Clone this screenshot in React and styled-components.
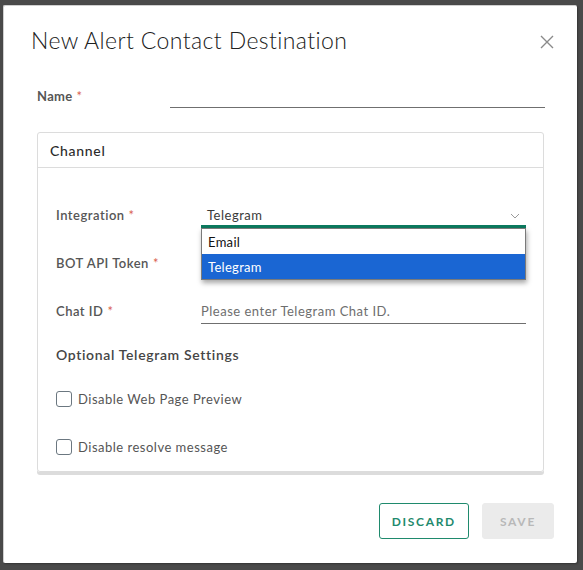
import React from "react";
import styled, { createGlobalStyle } from "styled-components";

const Global = createGlobalStyle`
  html, body { margin: 0; padding: 0; background: #4a4a4a; }
  body { font-family: "Lato", "Open Sans", sans-serif; letter-spacing: 0.5px; }
  * { box-sizing: border-box; }
`;

const Backdrop = styled.div`
  width: 583px;
  height: 570px;
  background: #4a4a4a;
  padding: 5px 6px 7px 3px;
`;

const Modal = styled.div`
  position: relative;
  width: 574px;
  height: 558px;
  background: #fff;
  border-radius: 2px;
  border-top: 1px solid #d0d0d0;
  border-left: 1px solid #d0d0d0;
  box-shadow: 1px 1px 2px rgba(0,0,0,0.3);
  display: flex;
  flex-direction: column;
`;

const Header = styled.div`
  display: flex;
  align-items: center;
  justify-content: space-between;
  height: 70px;
  padding: 0 23px 0 27px;
`;

const Title = styled.h3`
  margin: 0 0 3px;
  font-size: 23px;
  font-weight: 300;
  color: #202020;
  letter-spacing: 0.4px;
`;

const Close = styled.button`
  border: 0;
  background: none;
  padding: 0;
  margin-top: 1px;
  width: 14px;
  height: 14px;
  display: flex;
  cursor: pointer;
`;

const Body = styled.div`
  flex: 1;
  padding: 0 32px 0 33px;
  display: flex;
  flex-direction: column;
`;

const NameRow = styled.div`
  display: flex;
  align-items: center;
  height: 35px;
  margin-top: 2px;
`;

const NameLabel = styled.label`
  width: 133px;
  font-size: 13px;
  font-weight: 700;
  color: #565656;
  letter-spacing: 0.3px;
`;

const Star = styled.span`
  color: #d9614f;
  margin-left: 4px;
  font-weight: 400;
`;

const Underline = styled.div`
  flex: 1;
  height: 24px;
  margin-top: 1px;
  border-bottom: 1px solid #6f6f6f;
`;

const Card = styled.div`
  margin: 19px 1px 0 0;
  border: 1px solid #dcdcdc;
  border-radius: 3px;
  box-shadow: 0 3px 0 0 #dcdcdc;
  height: 340px;
  display: flex;
  flex-direction: column;
`;

const CardHeader = styled.div`
  height: 35px;
  border-bottom: 1px solid #dcdcdc;
  display: flex;
  align-items: center;
  padding: 0 12px;
  font-size: 14px;
  color: #2b2b2b;
  font-weight: 500;
  letter-spacing: 0.7px;
`;

const CardBody = styled.div`
  padding: 23px 17px 0 18px;
  display: flex;
  flex-direction: column;
`;

const Row = styled.div`
  display: flex;
  align-items: center;
  height: 48px;
`;

const Label = styled.label`
  width: 145px;
  font-size: 13px;
  font-weight: 600;
  color: #565656;
`;

const Field = styled.div`
  position: relative;
  flex: 1;
  height: ${(p) => (p.$select ? "26px" : "24px")};
  margin-top: ${(p) => (p.$select ? "0" : "1px")};
  display: flex;
  align-items: center;
  padding: ${(p) => (p.$select ? "3px 0 0 6px" : "0")};
  border-bottom: ${(p) => (p.$select ? "3px solid #0c7a5f" : "1px solid #6f6f6f")};
  font-size: 13px;
  color: ${(p) => (p.$placeholder ? "#6e6e6e" : "#3a3a3a")};
`;

const Chevron = styled.svg`
  position: absolute;
  right: 6px;
  top: 11px;
`;

const Menu = styled.div`
  position: absolute;
  left: 0;
  right: 0;
  top: 100%;
  margin-top: 3px;
  border: 1px solid #7a7a7a;
  background: #fff;
  box-shadow: 1px 3px 5px rgba(0,0,0,0.35);
  z-index: 5;
`;

const Option = styled.div`
  height: 25px;
  display: flex;
  align-items: center;
  padding-left: 6px;
  font-size: 13px;
  letter-spacing: 0.3px;
  color: ${(p) => (p.$active ? "#fff" : "#111")};
  background: ${(p) => (p.$active ? "#1a66d3" : "#fff")};
`;

const SectionTitle = styled.div`
  height: 39px;
  display: flex;
  align-items: center;
  font-size: 14px;
  font-weight: 600;
  color: #454545;
  letter-spacing: 0.65px;
`;

const CheckRow = styled.label`
  height: 48px;
  display: flex;
  align-items: center;
  gap: 6px;
  font-size: 13px;
  color: #555;
  padding-top: 2px;
`;

const Box = styled.span`
  width: 16px;
  height: 16px;
  border: 1px solid #6b7780;
  border-radius: 3px;
  background: #fff;
`;

const Footer = styled.div`
  display: flex;
  justify-content: flex-end;
  gap: 13px;
  padding: 0 23px 24px 0;
`;

const Button = styled.button`
  height: 36px;
  padding: 0 ${(p) => p.$pad}px;
  border-radius: 3px;
  font-family: inherit;
  font-size: 12px;
  font-weight: 700;
  letter-spacing: 1.7px;
  text-transform: uppercase;
  border: 1px solid ${(p) => (p.$disabled ? "#ebebeb" : "#1f8a6d")};
  background: ${(p) => (p.$disabled ? "#ebebeb" : "#fff")};
  color: ${(p) => (p.$disabled ? "#b8b8b8" : "#1f8a6d")};
`;

export default function App() {
  return (
    <>
      <Global />
      <Backdrop>
        <Modal>
          <Header>
            <Title>New Alert Contact Destination</Title>
            <Close aria-label="close">
              <svg width="14" height="14" viewBox="0 0 14 14">
                <path d="M1 1 L13 13 M13 1 L1 13" stroke="#8a8a8a" strokeWidth="1.4" fill="none" />
              </svg>
            </Close>
          </Header>
          <Body>
            <NameRow>
              <NameLabel>Name<Star>*</Star></NameLabel>
              <Underline />
            </NameRow>
            <Card>
              <CardHeader>Channel</CardHeader>
              <CardBody>
                <Row>
                  <Label>Integration<Star>*</Star></Label>
                  <Field $select>
                    Telegram
                    <Chevron width="10" height="6" viewBox="0 0 10 6">
                      <path d="M1 1 L5 5 L9 1" stroke="#9a9a9a" strokeWidth="1" fill="none" />
                    </Chevron>
                    <Menu>
                      <Option>Email</Option>
                      <Option $active>Telegram</Option>
                    </Menu>
                  </Field>
                </Row>
                <Row>
                  <Label>BOT API Token<Star>*</Star></Label>
                  <Field />
                </Row>
                <Row>
                  <Label>Chat ID<Star>*</Star></Label>
                  <Field $placeholder>Please enter Telegram Chat ID.</Field>
                </Row>
                <SectionTitle>Optional Telegram Settings</SectionTitle>
                <CheckRow><Box />Disable Web Page Preview</CheckRow>
                <CheckRow><Box />Disable resolve message</CheckRow>
              </CardBody>
            </Card>
          </Body>
          <Footer>
            <Button $pad={12}>Discard</Button>
            <Button $pad={17} $disabled>Save</Button>
          </Footer>
        </Modal>
      </Backdrop>
    </>
  );
}
